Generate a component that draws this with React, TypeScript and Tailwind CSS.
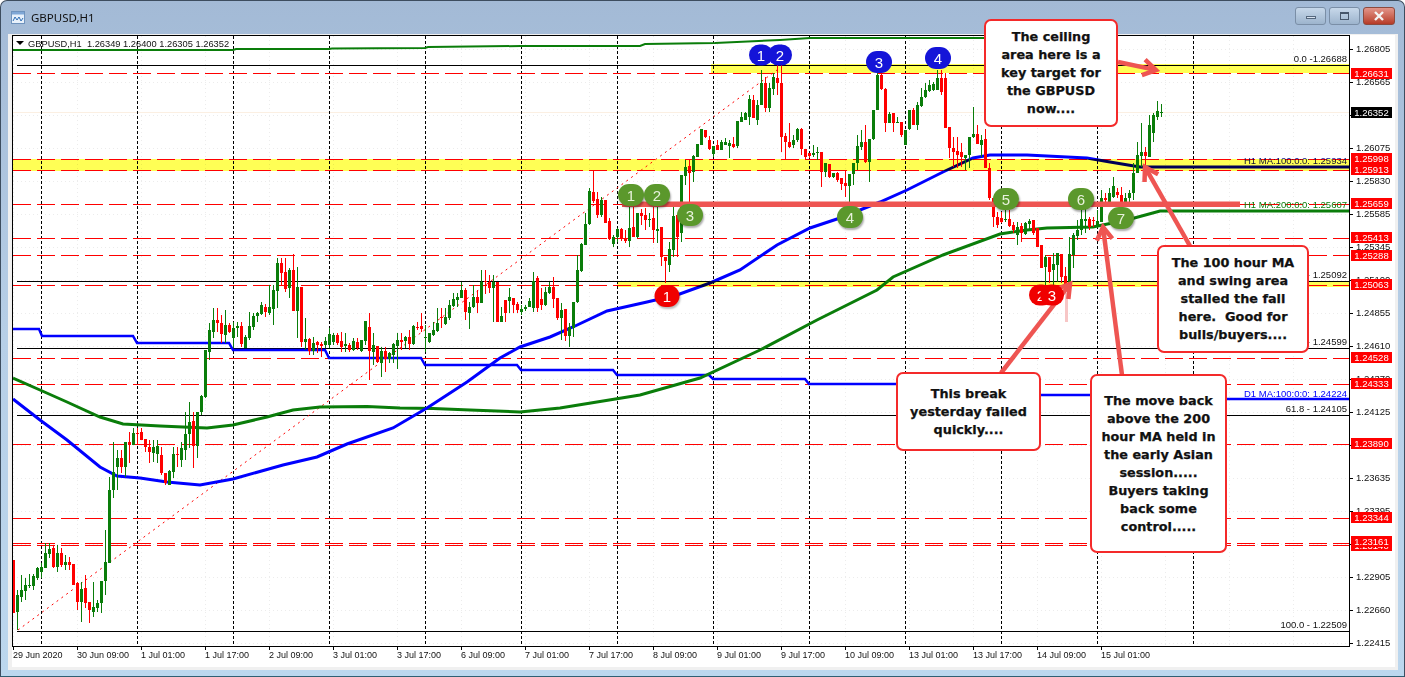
import React from "react";

type C = ["G" | "R", number, number, number, number];
type Candle = { x: number; c: string; t: number; b: number; wt: number; wb: number };

const seg = (start: number, off: number, rows: C[]): Candle[] =>
  rows.map(([c, t, b, wt, wb], i) => ({
    x: start + i * 4,
    c: c === "G" ? "#0a7d0a" : "#ff0000",
    t: off + t / 3,
    b: off + b / 3,
    wt: off + wt / 3,
    wb: off + wb / 3,
  }));

const candles: Candle[] = [
  ...seg(13, 300, [
    ["R",780,940,780,940],["G",885,935,870,990],["G",870,890,825,905],["G",855,872,835,900],["G",855,858,822,865],
    ["G",828,858,822,870],["G",805,835,800,840],["G",800,815,790,835],["G",758,805,730,805],["G",748,762,728,775],
    ["R",745,800,735,805],["G",760,800,735,815],["R",760,795,745,800],["G",785,795,765,810],["R",785,795,770,810],
    ["R",792,855,792,855],["R",850,905,845,930],["G",868,905,845,965],["R",865,908,825,925],["R",905,930,905,970],
    ["G",922,935,845,950],["G",910,925,900,935],["G",842,910,842,940],["G",785,842,690,885],["G",570,790,530,790],
    ["G",515,570,425,595],["G",475,500,450,570],["R",475,500,450,520],["G",425,500,425,530],["R",425,435,395,490],
    ["G",398,435,385,435],["R",398,402,385,435],["R",395,420,385,420],["R",418,442,418,455],["R",440,455,420,488],
    ["G",440,458,420,485],["G",438,462,420,490],["R",465,520,440,525],["R",518,550,518,555],["G",512,555,510,555],
    ["G",462,515,440,535],["R",462,465,440,500],["G",445,480,425,500],["G",402,450,335,480],["G",365,402,305,445],
    ["R",362,437,335,505],["G",335,437,335,475],["G",288,335,285,345],["G",150,290,150,295],["G",90,155,70,180],
  ]),
  ...seg(213, 245, [
    ["G",225,260,190,280],["R",225,233,190,260],["R",235,268,210,295],["G",240,270,195,295],["R",240,262,235,265],
    ["G",248,280,230,310],["G",242,248,230,275],["R",242,298,230,305],["G",275,308,270,310],["G",243,280,200,285],
    ["G",212,245,205,255],["G",205,212,200,232],["G",180,207,170,210],["R",185,200,178,215],["G",185,205,120,210],
    ["G",135,192,120,240],["G",55,138,40,190],["R",55,85,40,120],["R",80,132,40,140],["G",75,130,70,160],
    ["R",75,197,28,197],["G",125,197,65,280],["R",125,290,125,305],["G",282,290,220,315],["R",282,318,280,330],
    ["G",295,318,275,330],["R",292,300,288,325],["R",298,303,290,335],["G",288,300,275,310],["G",268,300,250,310],
  ]),
  ...seg(333, 265, [
    ["G",210,230,205,240],["R",210,235,205,240],["R",228,245,200,262],["G",238,243,205,262],["R",240,255,235,262],
    ["G",228,255,218,258],["R",230,250,220,255],["G",225,258,225,260],["G",168,228,168,240],["R",185,258,143,345],
    ["G",240,262,205,300],["R",242,292,242,295],["G",258,295,245,335],["R",258,282,245,320],["G",265,282,260,295],
    ["G",236,270,235,295],["G",225,242,205,312],["R",225,232,205,255],["G",215,228,212,250],["R",215,236,195,255],
    ["G",182,238,180,240],["R",185,187,170,195],["R",183,192,145,200],["G",215,218,180,260],["G",205,232,205,235],
    ["G",195,210,170,212],["G",175,198,130,200],["R",155,160,130,190],["G",155,178,130,180],["G",120,158,105,165],
    ["G",102,122,85,125],["G",95,105,85,125],
  ]),
  ...seg(461, 270, [
    ["G",60,85,35,85],["R",60,125,55,150],["G",110,128,95,178],["G",80,112,45,115],["R",80,98,60,128],
    ["G",35,100,0,100],["R",33,36,0,72],["R",35,53,15,70],["G",35,53,15,155],["R",35,155,35,155],
    ["G",138,155,110,155],["R",90,130,90,155],["G",82,92,55,130],["R",83,105,83,130],["R",103,120,95,130],
    ["G",117,125,105,135],["G",110,118,105,122],["G",92,110,85,112],["G",32,115,5,125],["R",25,115,18,125],
    ["R",88,105,55,120],["G",65,105,50,108],["G",52,68,35,72],["R",52,88,20,115],["R",85,145,85,150],
    ["G",120,145,100,210],["R",118,198,118,212],["G",170,198,160,230],["G",95,175,95,200],
  ]),
  ...seg(577, 150, [
    ["G",360,455,315,460],["G",282,362,280,365],["G",222,285,190,285],["G",122,222,115,225],["R",125,152,60,160],
    ["R",148,195,125,205],["G",150,195,140,200],["R",150,218,150,220],["R",212,268,205,270],["G",262,282,255,290],
    ["G",238,262,235,275],["R",238,265,235,272],["R",265,272,240,278],["G",235,272,165,290],["R",232,260,165,262],
    ["G",190,260,190,265],["R",190,197,178,225],["R",195,210,175,240],["G",208,210,190,232],["R",205,240,170,280],
    ["G",238,243,165,280],["R",232,320,232,348],["R",322,332,320,400],["G",298,345,275,365],["G",198,300,170,320],
    ["R",195,260,195,320],
  ]),
  ...seg(681, 60, [
    ["G",345,520,345,545],["G",320,347,300,375],["R",317,340,300,430],["G",288,335,285,365],["G",252,290,252,292],
    ["G",207,255,207,255],["R",210,230,210,235],["R",240,268,228,270],["G",258,282,258,292],["R",255,270,240,270],
    ["G",245,270,240,270],["G",245,255,235,255],["G",250,258,240,295],["R",252,260,232,265],["G",183,258,183,265],
    ["G",172,185,155,185],["G",160,180,155,180],["G",118,170,105,195],["R",120,175,105,175],["G",135,180,120,195],
    ["G",70,135,30,135],["R",70,145,50,155],["G",85,145,70,155],["G",52,88,40,105],["R",55,68,15,105],
    ["R",68,230,15,275],["R",228,245,220,300],["R",245,262,190,265],["G",240,255,225,265],["G",208,240,205,245],
    ["R",208,268,205,285],["R",268,290,268,298],["R",280,288,280,295],["G",278,285,255,290],["G",275,280,262,300],
    ["R",275,335,275,380],["G",308,335,308,352],["R",312,352,312,355],["G",338,350,338,355],["R",338,360,335,365],
    ["R",355,372,355,390],["R",370,378,330,412],["G",342,378,342,425],["G",310,342,310,375],["G",258,310,225,330],
    ["G",245,262,210,270],["R",245,305,195,310],["G",238,305,238,365],["G",150,238,150,240],["G",45,150,30,150],
    ["R",45,88,35,90],["R",88,190,85,215],["G",162,190,155,190],["R",160,190,160,215],["G",185,190,172,190],
    ["R",185,225,185,230],["G",210,255,210,255],["G",150,208,150,210],["R",150,195,145,195],["G",135,195,125,210],
    ["G",112,138,85,140],["G",90,112,70,115],["G",75,92,60,95],["G",72,90,65,92],["G",55,90,30,90],
    ["R",55,95,30,105],["R",55,205,40,205],["R",202,265,202,295],["R",265,275,232,320],["R",272,285,232,325],
    ["R",275,290,250,320],["G",285,295,285,330],["G",232,285,232,325],["G",222,232,140,235],["R",222,252,195,252],
    ["G",240,255,225,290],["R",238,325,208,325],["R",325,415,310,420],["R",415,472,415,500],
  ]),
  ...seg(997, 170, [
    ["R",142,165,125,175],["R",143,155,125,160],["G",148,150,120,155],["R",148,168,120,170],["R",165,180,155,190],
    ["G",170,195,155,225],["R",168,190,160,215],["G",160,193,155,195],["G",152,162,148,180],["R",150,190,150,195],
    ["R",175,230,175,232],["R",225,295,225,295],["G",262,292,255,345],["R",262,305,262,340],["G",282,300,250,345],
    ["G",250,285,250,335],["R",252,320,252,340],["R",318,342,290,345],["G",252,342,200,385],["G",195,255,190,295],
    ["G",180,198,150,210],["G",148,180,115,195],["G",148,152,115,190],["R",148,172,140,180],["R",150,153,140,170],
    ["G",152,172,120,175],["G",85,155,60,155],["R",85,90,70,100],["G",70,95,55,100],
  ]),
  ...seg(1113, 130, [
    ["G",168,200,140,205],["R",185,195,175,205],["R",195,215,170,225],["G",205,215,190,220],["G",188,205,180,220],
  ]),
  ...seg(1133, 0, [
    ["G",520,580,490,600],["G",465,520,425,520],["G",455,468,370,500],["R",455,468,440,545],["G",375,470,345,470],
    ["G",345,400,340,425],["G",333,350,303,360],["G",335,337,312,352],
  ]),
];

const poly = (p: number[][]) => p.map((q) => q.join(",")).join(" ");

const ma100 = [[13,399],[40,420],[67,440],[100,467],[117,476],[140,478],[167,482],[200,485],[233,479],[283,465],[317,457],[347,444],[393,428],[427,408],[467,382],[500,358],[520,347],[550,337],[573,327],[607,311],[647,302],[677,295],[710,283],[740,270],[777,245],[810,228],[840,218],[880,202],[907,190],[943,172],[973,158],[990,155],[1027,155],[1087,158],[1110,162],[1140,167],[1349,167]];
const ma200 = [[13,378],[40,390],[67,402],[100,417],[123,424],[160,426],[183,427],[207,428],[233,425],[267,417],[293,410],[320,407],[367,406.5],[400,408],[433,408.5],[470,410],[520,412],[560,408],[640,395],[700,378],[760,350],[817,320],[877,290],[893,277],[943,255],[1000,234],[1027,230],[1047,228],[1093,227],[1127,220],[1160,211],[1349,211]];
const d1 = [[13,329],[39,329],[42,336],[133,336],[137,343],[229,343],[233,350],[325,350],[329,358],[421,358],[425,365],[517,365],[521,370],[613,370],[617,375],[709,375],[713,379],[805,379],[809,384],[901,384],[905,389],[997,389],[1001,395],[1097,395],[1101,399],[1349,399]];
const top = [[13,50],[233,50],[236,49],[329,49],[332,48.5],[425,48],[428,47],[521,46],[640,46],[645,44],[715,43],[780,40],[810,38],[985,38]];

const redLines = [73,159,170,204,238,255,285,358,384,444,518,543,545];
const blackLines = [65,281,348,415,631];
const verticals = [41,137,233,329,425,521,617,713,809,905,1001,1097,1193];
const gridH = [49,82,115,148,181,214,247,280,313,346,379,412,445,478,511,544,577,610,643];
const gridV = Array.from({ length: 21 }, (_, i) => 13 + i * 64);

const prices = ["1.26805","1.26565","1.26320","1.26075","1.25830","1.25585","1.25345","1.25100","1.24855","1.24610","1.24370","1.24125","1.23880","1.23635","1.23395","1.23150","1.22905","1.22660","1.22415"];
const times = ["29 Jun 2020","30 Jun 09:00","1 Jul 01:00","1 Jul 17:00","2 Jul 09:00","3 Jul 01:00","3 Jul 17:00","6 Jul 09:00","7 Jul 01:00","7 Jul 17:00","8 Jul 09:00","9 Jul 01:00","9 Jul 17:00","10 Jul 09:00","13 Jul 01:00","13 Jul 17:00","14 Jul 09:00","15 Jul 01:00"];

const tags: { t: string; cls: string }[] = [
  { t: "1.26631", cls: "top-[68px] bg-[#ff0000]" },
  { t: "1.26352", cls: "top-[107px] bg-black" },
  { t: "1.25998", cls: "top-[153px] bg-[#ff0000]" },
  { t: "1.25913", cls: "top-[164px] bg-[#ff0000]" },
  { t: "1.25659", cls: "top-[198px] bg-[#ff0000]" },
  { t: "1.25413", cls: "top-[232px] bg-[#ff0000]" },
  { t: "1.25288", cls: "top-[250px] bg-[#ff0000]" },
  { t: "1.25063", cls: "top-[279px] bg-[#ff0000]" },
  { t: "1.24528", cls: "top-[352px] bg-[#ff0000]" },
  { t: "1.24333", cls: "top-[378px] bg-[#ff0000]" },
  { t: "1.23890", cls: "top-[438px] bg-[#ff0000]" },
  { t: "1.23344", cls: "top-[512px] bg-[#ff0000]" },
  { t: "1.23140", cls: "top-[540px] bg-[#ff0000]" },
  { t: "1.23161", cls: "top-[536px] bg-[#ff0000]" },
];

const pins: { n: string; cls: string }[] = [
  { n: "1", cls: "left-[761px] top-[55px] w-[24px] h-[21px] bg-[#1414d8] text-white" },
  { n: "2", cls: "left-[780px] top-[55px] w-[24px] h-[21px] bg-[#1414d8] text-white" },
  { n: "3", cls: "left-[879px] top-[62px] w-[26px] h-[22px] bg-[#1414d8] text-white" },
  { n: "4", cls: "left-[938px] top-[58px] w-[26px] h-[22px] bg-[#1414d8] text-white" },
  { n: "1", cls: "left-[631px] top-[195px] w-[26px] h-[22px] bg-[#5b982c] text-[#e8f2dc] shadow-[1px_2px_2px_#0005]" },
  { n: "2", cls: "left-[657px] top-[195px] w-[26px] h-[22px] bg-[#5b982c] text-[#e8f2dc] shadow-[1px_2px_2px_#0005]" },
  { n: "3", cls: "left-[690px] top-[215px] w-[26px] h-[22px] bg-[#5b982c] text-[#e8f2dc] shadow-[1px_2px_2px_#0005]" },
  { n: "4", cls: "left-[850px] top-[217px] w-[26px] h-[22px] bg-[#5b982c] text-[#e8f2dc] shadow-[1px_2px_2px_#0005]" },
  { n: "5", cls: "left-[1006px] top-[199px] w-[26px] h-[22px] bg-[#5b982c] text-[#e8f2dc] shadow-[1px_2px_2px_#0005]" },
  { n: "6", cls: "left-[1081px] top-[199px] w-[26px] h-[22px] bg-[#5b982c] text-[#e8f2dc] shadow-[1px_2px_2px_#0005]" },
  { n: "7", cls: "left-[1121px] top-[218px] w-[26px] h-[22px] bg-[#5b982c] text-[#e8f2dc] shadow-[1px_2px_2px_#0005]" },
  { n: "1", cls: "left-[667px] top-[296px] w-[25px] h-[22px] bg-[#f00000] text-white shadow-[1px_2px_2px_#0004]" },
  { n: "2", cls: "left-[1041px] top-[295px] w-[24px] h-[21px] bg-[#f00000] text-white" },
  { n: "3", cls: "left-[1052px] top-[295px] w-[24px] h-[21px] bg-[#f00000] text-white" },
];

const Arrow = ({ x1, y1, x2, y2 }: { x1: number; y1: number; x2: number; y2: number }) => {
  const a = Math.atan2(y2 - y1, x2 - x1);
  const len = 15;
  const s = 0.55;
  const b1 = [x2 - len * Math.cos(a - s), y2 - len * Math.sin(a - s)];
  const b2 = [x2 - len * Math.cos(a + s), y2 - len * Math.sin(a + s)];
  return (
    <g stroke="#ee5552" fill="none">
      <line x1={x1} y1={y1} x2={x2 - 3 * Math.cos(a)} y2={y2 - 3 * Math.sin(a)} strokeWidth={4.5} />
      <polyline points={poly([b1, [x2, y2], b2])} strokeWidth={4.5} strokeLinejoin="miter" />
    </g>
  );
};

const Callout = ({ cls, lines }: { cls: string; lines: string[] }) => (
  <div
    className={`absolute flex flex-col items-center justify-center bg-white border-2 border-[#f42a2a] rounded-[7px] font-['DejaVu_Sans',sans-serif] font-bold text-[12.8px] leading-[18px] [-webkit-text-stroke:0.25px_#111] text-[#111] whitespace-pre ${cls}`}
  >
    {lines.map((l, i) => (
      <span key={i}>{l}</span>
    ))}
  </div>
);

const sans = "'Liberation Sans', Arial, sans-serif";

export default function App() {
  return (
    <div className="relative w-[1405px] h-[677px] overflow-hidden bg-white font-['Liberation_Sans',sans-serif]">
      <div className="flex flex-col w-full h-full rounded-t-[7px] border border-[#3d4d5f] border-b-[#2f5f73] bg-gradient-to-b from-[#a3bad6] via-[#b7cfe7] to-[#bcd7ee]">
        {/* title bar */}
        <div className="flex items-center h-[33px] shrink-0 pl-[10px] pr-[9px]">
          <svg width="15" height="15" viewBox="0 0 15 15" className="mr-[5px]">
            <rect x="0.5" y="1.5" width="13" height="12" fill="#e8f1fb" stroke="#6f93bd" />
            <rect x="1" y="2" width="12" height="2.5" fill="#7fa7d6" />
            <polyline points="2,11 4,7 6,10 8,7 10,11 12,8" fill="none" stroke="#2f6fb5" strokeWidth="1" />
          </svg>
          <span className="text-[11.5px] text-[#111] font-['Noto_Sans',sans-serif]">GBPUSD,H1</span>
          <div className="ml-auto flex gap-[3px] -mt-[3px]">
            <div className="flex items-center justify-center w-[31px] h-[18px] rounded-[3px] border border-[#7a8ea6] bg-gradient-to-b from-[#c7d8ea] to-[#9db4cd]">
              <div className="w-[10px] h-[3px] mt-[3px] bg-[#d8e2ee] border border-[#55677d]" />
            </div>
            <div className="flex items-center justify-center w-[31px] h-[18px] rounded-[3px] border border-[#7a8ea6] bg-gradient-to-b from-[#c7d8ea] to-[#9db4cd]">
              <div className="w-[9px] h-[8px] bg-transparent border border-[#46566a] border-t-2" />
            </div>
            <div className="flex items-center justify-center w-[32px] h-[18px] rounded-[3px] border border-[#8c4a3e] bg-gradient-to-b from-[#e2958a] to-[#b63a26]">
              <svg width="12" height="10" viewBox="0 0 12 10">
                <path d="M2 1 L10 9 M10 1 L2 9" stroke="#f4f4f4" strokeWidth="2.4" />
              </svg>
            </div>
          </div>
        </div>

        {/* light inner frame around the client area */}
        <div className="ml-[7px] w-[1390px] pt-[1px] pl-[4px] pr-[3px] pb-[3px] bg-[#f0f0f0] shrink-0">
          <div className="w-[1383px] h-[632px] bg-white flex flex-col">
            <div className="flex h-[612px]">
              <div className="w-[1338px] h-[612px] border border-black shrink-0">
                <svg width="1336" height="610" viewBox="13 36 1336 610" className="block">
                  {gridH.map((y) => (
                    <line key={y} x1={13} x2={1349} y1={y + 0.5} y2={y + 0.5} stroke="#ececec" strokeDasharray="1 3" />
                  ))}
                  {gridV.map((x) => (
                    <line key={x} x1={x + 0.5} x2={x + 0.5} y1={36} y2={646} stroke="#ececec" strokeDasharray="1 3" />
                  ))}
                  <line x1={13} x2={1349} y1={112.5} y2={112.5} stroke="#fbefe2" />
                  {verticals.map((x) => (
                    <line key={x} x1={x + 0.5} x2={x + 0.5} y1={36} y2={646} stroke="#000" strokeDasharray="3 2" />
                  ))}
                  {blackLines.map((y) => (
                    <line key={y} x1={17} x2={1349} y1={y + 0.5} y2={y + 0.5} stroke="#000" />
                  ))}
                  {redLines.map((y) => (
                    <line key={y} x1={13} x2={1349} y1={y + 0.5} y2={y + 0.5} stroke="#ff0000" strokeDasharray="18 6" />
                  ))}
                  <line x1={18} y1={630} x2={777} y2={70} stroke="#ff0000" strokeDasharray="2 4" />
                  <polyline points={poly(top)} fill="none" stroke="#0a7d0a" strokeWidth={2} />
                  <polyline points={poly(d1)} fill="none" stroke="#0000ff" strokeWidth={2.5} />
                  <polyline points={poly(ma200)} fill="none" stroke="#0a7d0a" strokeWidth={3} />
                  <polyline points={poly(ma100)} fill="none" stroke="#0000ff" strokeWidth={3} />
                  <g shapeRendering="crispEdges">
                    {candles.map((c) => (
                      <g key={c.x} fill={c.c}>
                        <rect x={c.x} y={c.wt} width={1} height={Math.max(1, c.wb - c.wt)} />
                        <rect x={c.x - 1} y={c.t} width={3} height={Math.max(1, c.b - c.t)} />
                      </g>
                    ))}
                  </g>
                  <rect x={1065} y={293} width={3} height={29} fill="#f7c6c6" />
                  <g style={{ fontFamily: sans, fontSize: 9.5 }}>
                    <text x={1347} y={62} textAnchor="end" fill="#111">0.0 -1.26688</text>
                    <text x={1347} y={164} textAnchor="end" fill="#111199">H1 MA:100:0:0: 1.25934</text>
                    <text x={1347} y={278} textAnchor="end" fill="#111">- 1.25092</text>
                    <text x={1347} y={345} textAnchor="end" fill="#111">- 1.24599</text>
                    <text x={1347} y={397} textAnchor="end" fill="#0000ff">D1 MA:100:0:0: 1.24224</text>
                    <text x={1347} y={412} textAnchor="end" fill="#111">61.8 - 1.24105</text>
                    <text x={1347} y={628} textAnchor="end" fill="#111">100.0 - 1.22509</text>
                  </g>
                  <rect x={711} y={64} width={638} height={9} fill="#ffff55" className="mix-blend-multiply" />
                  <rect x={13} y={159} width={1336} height={12} fill="#ffff55" className="mix-blend-multiply" />
                  <rect x={617} y={281} width={732} height={6} fill="#ffff55" className="mix-blend-multiply" />
                  <rect x={622} y={201.5} width={618} height={5.5} fill="#ee5552" />
                  <text x={1347} y={208} textAnchor="end" fill="#0a7d0a" style={{ fontFamily: sans, fontSize: 9.5 }}>H1 MA:200:0:0: 1.25607</text>
                  <Arrow x1={1118} y1={62} x2={1156} y2={70} />
                  <Arrow x1={1190} y1={246} x2={1145} y2={167} />
                  <Arrow x1={1122} y1={375} x2={1103} y2={227} />
                  <Arrow x1={1001} y1={373} x2={1070} y2={284} />
                  <polygon points="16,41 24,41 20,45" fill="#000" />
                  <text x={28} y={46.5} fill="#111" style={{ fontFamily: sans, fontSize: 9.3 }} xmlSpace="preserve">
                    GBPUSD,H1  1.26349 1.26400 1.26305 1.26352
                  </text>
                </svg>
              </div>
              {/* price axis */}
              <div className="flex flex-col -mt-[2px] text-[9.5px] text-[#111] w-[45px]">
                {prices.map((p) => (
                  <div key={p} className="flex items-center h-[33px] shrink-0">
                    <div className="w-[3px] h-px bg-black mr-[3px]" />
                    <span>{p}</span>
                  </div>
                ))}
              </div>
            </div>
            {/* time axis */}
            <div className="flex pl-[1px] h-[20px] text-[9px] leading-[11px] text-[#111]">
              {times.map((t) => (
                <div key={t} className="w-[64px] shrink-0 border-l border-transparent">
                  <div className="w-px h-[3px] -ml-px bg-black" />
                  <div className="-ml-px whitespace-nowrap">{t}</div>
                </div>
              ))}
            </div>
          </div>
        </div>
      </div>

      {/* price tags over the axis */}
      {tags.map((t) => (
        <div
          key={t.t}
          className={`absolute left-[1351px] w-[41px] h-[11px] flex items-center justify-center text-[9.5px] leading-none text-white ${t.cls}`}
        >
          {t.t}
        </div>
      ))}

      {/* numbered markers */}
      {pins.map((p, i) => (
        <div
          key={i}
          className={`absolute -translate-x-1/2 -translate-y-1/2 rounded-full flex items-center justify-center text-[15px] leading-none ${p.cls}`}
        >
          {p.n}
        </div>
      ))}

      {/* annotation callouts */}
      <Callout cls="left-[984px] top-[19px] w-[134px] h-[108px]" lines={["The ceiling", "area here is a", "key target for", "the GBPUSD", "now...."]} />
      <Callout cls="left-[1157px] top-[245px] w-[152px] h-[108px]" lines={["The 100 hour MA", "and swing area", "stalled the fall", "here.  Good for", "bulls/buyers...."]} />
      <Callout cls="left-[896px] top-[372px] w-[145px] h-[79px]" lines={["This break", "yesterday failed", "quickly...."]} />
      <Callout cls="left-[1090px] top-[374px] w-[137px] h-[179px]" lines={["The move back", "above the 200", "hour MA held in", "the early Asian", "session.....", "Buyers taking", "back some", "control....."]} />
    </div>
  );
}
